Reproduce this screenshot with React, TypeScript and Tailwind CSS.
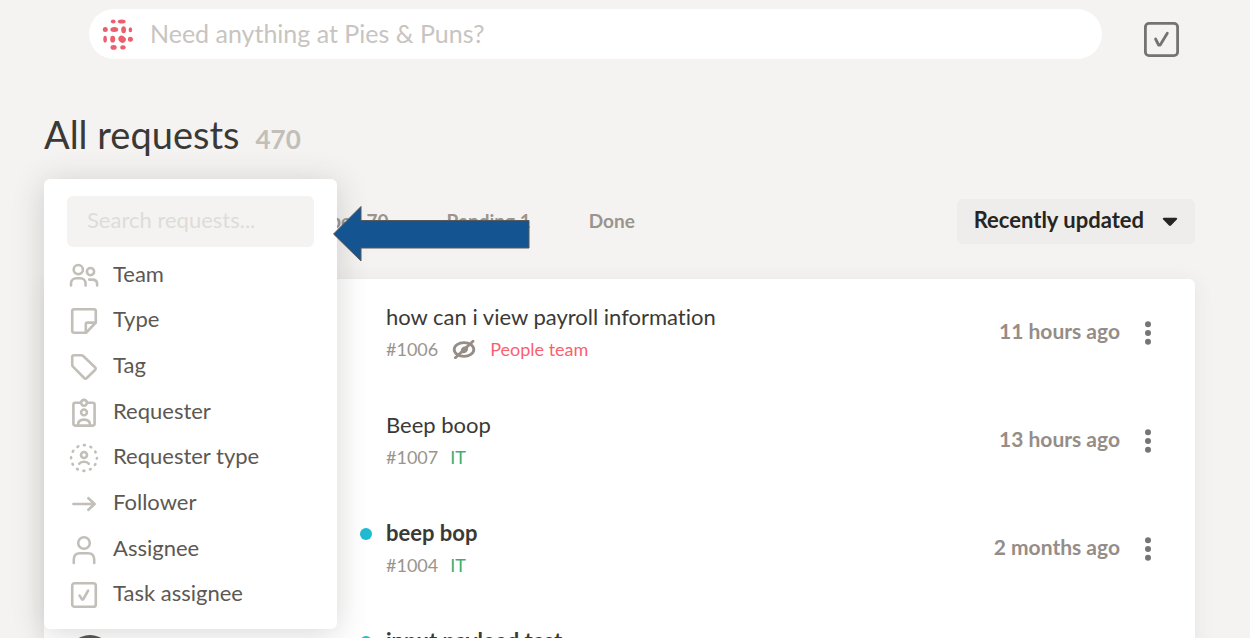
import type { ReactNode } from "react";

type Request = {
  id: string;
  title: string;
  team: string;
  teamClass: string;
  updated: string;
  unread?: boolean;
  hidden?: boolean;
};

const requests: Request[] = [
  {
    id: "#1006",
    title: "how can i view payroll information",
    team: "People team",
    teamClass: "text-[#fa5f70]",
    updated: "11 hours ago",
    hidden: true,
  },
  {
    id: "#1007",
    title: "Beep boop",
    team: "IT",
    teamClass: "text-[#3fae6f]",
    updated: "13 hours ago",
  },
  {
    id: "#1004",
    title: "beep bop",
    team: "IT",
    teamClass: "text-[#3fae6f]",
    updated: "2 months ago",
    unread: true,
  },
  {
    id: "#1002",
    title: "input payload test",
    team: "IT",
    teamClass: "text-[#3fae6f]",
    updated: "2 months ago",
    unread: true,
  },
];

const Icon = ({ children }: { children: ReactNode }) => (
  <svg
    viewBox="0 0 30 30"
    className="h-[30px] w-[30px] shrink-0"
    fill="none"
    stroke="currentColor"
    strokeWidth="2.6"
    strokeLinecap="round"
    strokeLinejoin="round"
    aria-hidden="true"
  >
    {children}
  </svg>
);

const filters: { label: string; icon: ReactNode }[] = [
  {
    label: "Team",
    icon: (
      <>
        <circle cx="9.3" cy="8.6" r="4.6" />
        <circle cx="21.5" cy="10.6" r="3.6" />
        <path d="M2 24.5v-1.8c0-3.4 2.4-5.4 5.4-5.4h3.8c3 0 5.4 2 5.4 5.4v1.8" />
        <path d="M20.2 18.6h3c3 0 4.9 1.8 4.9 4.4v1.5" />
      </>
    ),
  },
  {
    label: "Type",
    icon: (
      <>
        <path d="M5.4 3.2h19.2c1.2 0 2.2.8 2.2 2v11.3L17 26.8H5.4c-1.3 0-2.2-.9-2.2-2.2V5.2c0-1.2.9-2 2.2-2z" />
        <path d="M26.6 16.6h-8.2c-1 0-1.6.6-1.6 1.6v8.4" />
      </>
    ),
  },
  {
    label: "Tag",
    icon: (
      <path d="M5.2 3.2h7c.8 0 1.4.3 2 .8l11.8 11.2c.9.8.9 2 0 2.8l-8.2 8c-.8.8-1.8.8-2.6 0L4.2 14.9c-.6-.6-1-1.2-1-2.2V5.2c0-1.2.8-2 2-2z" />
    ),
  },
  {
    label: "Requester",
    icon: (
      <>
        <path d="M11 4.8H6.4c-1.2 0-2 .8-2 2v18.8c0 1.2.8 2 2 2h17.2c1.2 0 2-.8 2-2V6.8c0-1.2-.8-2-2-2H19" />
        <circle cx="15" cy="4.8" r="2.9" />
        <circle cx="15" cy="14.4" r="2.9" />
        <path d="M9 27c0-3.6 2.4-5.4 6-5.4s6 1.8 6 5.4" />
      </>
    ),
  },
  {
    label: "Requester type",
    icon: (
      <>
        <circle
          cx="15"
          cy="15"
          r="12.9"
          strokeDasharray="0.9 5.855"
          strokeDashoffset="0.45"
        />
        <circle cx="15" cy="12" r="3" />
        <path d="M10.2 20.8c1-1.4 2.6-2 4.8-2s3.8.6 4.8 2" />
      </>
    ),
  },
  {
    label: "Follower",
    icon: <path d="M4.4 15h21M19.4 9.2l6.2 5.8-6.2 5.8" />,
  },
  {
    label: "Assignee",
    icon: (
      <>
        <circle cx="15" cy="8" r="5.8" />
        <path d="M4.8 28v-3.4c0-4 2.4-6.4 6.2-6.4h8c3.8 0 6.2 2.4 6.2 6.4V28" />
      </>
    ),
  },
  {
    label: "Task assignee",
    icon: (
      <>
        <rect x="3.2" y="3.2" width="23.6" height="23.6" rx="2.4" />
        <path d="M10.6 15.6 13 19.4H14.2L19.1 10.6" />
      </>
    ),
  },
];

const Logo = () => (
  <svg viewBox="0 0 32 32" className="h-8 w-8 shrink-0" fill="#ea606c" aria-hidden="true">
    <ellipse cx="11.2" cy="3.5" rx="2.4" ry="2" />
    <ellipse cx="19.7" cy="3.5" rx="3.9" ry="2" />
    <ellipse cx="3.3" cy="11.6" rx="2.5" ry="2.5" />
    <ellipse cx="12.3" cy="11.6" rx="3.9" ry="2.5" />
    <ellipse cx="21.6" cy="11.8" rx="2.4" ry="3.5" />
    <ellipse cx="28.4" cy="11.8" rx="1.8" ry="2.5" />
    <ellipse cx="3.1" cy="21.2" rx="1.8" ry="3.4" />
    <ellipse cx="10.7" cy="21.2" rx="2.5" ry="3.4" />
    <ellipse cx="20.1" cy="21.2" rx="3.9" ry="3.3" transform="rotate(35 20.1 21.2)" />
    <ellipse cx="28.4" cy="21.3" rx="2.5" ry="2.5" />
    <ellipse cx="11.6" cy="29.4" rx="3.1" ry="2.4" />
    <ellipse cx="21" cy="29.4" rx="2.7" ry="2.1" />
  </svg>
);

const HiddenIcon = () => (
  <svg
    viewBox="0 0 24 20"
    className="mx-[2px] h-5 w-6"
    fill="none"
    stroke="#958d86"
    strokeLinecap="round"
    role="img"
    aria-label="Hidden"
  >
    <ellipse cx="12" cy="10.5" rx="9.8" ry="6.8" strokeWidth="2.8" />
    <path d="M9 13.6c-1-3.6 1.6-6.6 5.6-6.2L16 9c.4 3.4-2.4 5.6-5.4 5.2z" fill="#958d86" stroke="none" />
    <path d="M3.4 18.8 21 2.2" strokeWidth="2.8" />
  </svg>
);

const FilterMenu = () => (
  <div className="absolute top-0 left-0 z-10 w-[293px] rounded-md bg-white px-[23px] pt-[17px] pb-[11px] shadow-[0_4px_32px_rgba(60,55,50,0.2)]">
    <input
      type="text"
      aria-label="Search requests"
      placeholder="Search requests..."
      className="block h-[51px] w-full rounded-md bg-[#f4f3f1] px-5 pb-1 text-[22px] text-[#3b3936] outline-none placeholder:text-[#dedcd9]"
    />
    <ul className="mt-[6px] grid h-[365px] grid-rows-8">
      {filters.map(({ label, icon }) => (
        <li key={label}>
          <button
            type="button"
            className="flex h-full w-full items-center gap-[14px] pl-[2px] text-left text-[22px] leading-7 text-[#5c5853]"
          >
            <span className="text-[#c2beb8]">
              <Icon>{icon}</Icon>
            </span>
            <span className="pb-1">{label}</span>
          </button>
        </li>
      ))}
    </ul>
  </div>
);

const RequestRow = ({ request }: { request: Request }) => (
  <li className="flex h-[108px] items-center pr-[33px]">
    <div className="w-[316px] shrink-0 pl-6">
      <div className="h-[44px] w-[44px] rounded-full bg-[#55564f]" />
    </div>
    <span className="w-[26px] shrink-0 pb-[30px]">
      {request.unread && (
        <span className="block h-3 w-3 rounded-full bg-[#20bad3]" />
      )}
    </span>
    <div className="flex-1">
      <a
        href="#"
        className={`block text-[22px] leading-7 text-[#3b3936] ${request.unread ? "font-bold" : ""}`}
      >
        {request.title}
      </a>
      <p className="mt-1 flex items-center gap-3 text-lg text-[#9b948d]">
        {request.id}
        {request.hidden && <HiddenIcon />}
        <span className={request.teamClass}>{request.team}</span>
      </p>
    </div>
    <span className="pb-1 text-[21px] font-bold text-[#958d86]">
      {request.updated}
    </span>
    <button type="button" aria-label="More actions" className="ml-[14px] text-[#777573]">
      <svg viewBox="0 0 28 28" className="h-7 w-7" fill="currentColor" aria-hidden="true">
        <circle cx="14" cy="5.3" r="3" />
        <circle cx="14" cy="14" r="3" />
        <circle cx="14" cy="22.7" r="3" />
      </svg>
    </button>
  </li>
);

const App = () => (
  <div className="h-screen overflow-hidden bg-[#f4f3f1] font-[Lato,sans-serif] text-[#3b3936] [font-variant-ligatures:none]">
    <header className="flex items-start pt-[9px] pr-[68px] pl-[89px]">
      <label className="flex h-[50px] flex-1 items-center gap-4 rounded-full bg-white pl-[13px]">
        <Logo />
        <input
          type="text"
          aria-label="Ask a question"
          placeholder="Need anything at Pies & Puns?"
          className="min-w-0 flex-1 bg-transparent text-[25px] outline-none placeholder:text-[#c8c4bf]"
        />
      </label>
      <button type="button" aria-label="Tasks" className="mt-[9px] ml-[38px] text-[#757371]">
        <svg
          viewBox="0 0 42 42"
          className="h-[42px] w-[42px]"
          fill="none"
          stroke="currentColor"
          strokeWidth="2.8"
          strokeLinecap="round"
          strokeLinejoin="round"
          aria-hidden="true"
        >
          <rect x="5.4" y="5.4" width="32.2" height="32.2" rx="3.6" />
          <path d="M15.6 21 18.6 27H20.2L27.3 15.2" />
        </svg>
      </button>
    </header>

    <main className="pt-[50px] pr-[55px] pl-11">
      <div className="flex items-baseline gap-4">
        <h1 className="text-[38px] leading-[48px]">All requests</h1>
        <span className="text-[26px] leading-8 font-bold text-[#c2beb8]">470</span>
      </div>

      <div className="relative mt-[21px]">
        <FilterMenu />

        <div className="flex items-center pt-5">
          <nav className="flex flex-1 gap-[58px] pl-[271px] text-[19px] font-bold text-[#9b948d]">
            <a href="#">Open 70</a>
            <a href="#">Pending 1</a>
            <a href="#">Done</a>
          </nav>
          <button
            type="button"
            className="flex h-[45px] items-center gap-[18px] rounded-md bg-[#eeedeb] px-[17px] text-[22px] leading-7 font-bold text-[#262523]"
          >
            <span className="pb-1">Recently updated</span>
            <svg viewBox="0 0 16 10" className="h-[10px] w-4" fill="currentColor" aria-hidden="true">
              <path d="M2 .8h12c1.2 0 1.6 1 .8 1.8L9 8.6c-.6.6-1.4.6-2 0L1.2 2.6C.4 1.8.8.8 2 .8z" />
            </svg>
          </button>
        </div>

        <ul className="mt-[35px] rounded-md bg-white shadow-[0_2px_20px_rgba(60,55,50,0.07)]">
          {requests.map((request) => (
            <RequestRow key={request.id} request={request} />
          ))}
        </ul>

        <svg
          viewBox="0 0 198 58"
          className="absolute top-[26px] left-[288px] z-20 h-[58px] w-[198px]"
          fill="#145591"
          stroke="#58595b"
          aria-hidden="true"
        >
          <path d="M1.5 29 29 1.5v14h168v27.5H29V56z" />
        </svg>
      </div>
    </main>
  </div>
);

export default App;
